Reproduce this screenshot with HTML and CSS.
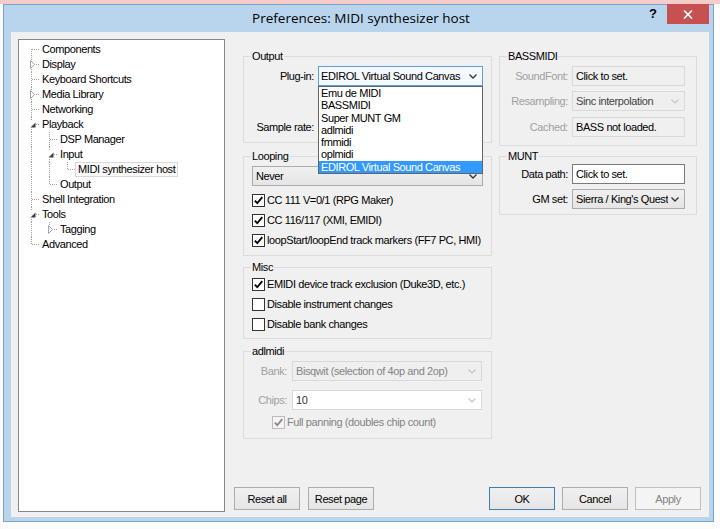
FILE: index.html
```html
<!DOCTYPE html>
<html>
<head>
<meta charset="utf-8">
<link rel="stylesheet" href="styles.css">
</head>
<body>
<div class="top-strip"></div>
<div class="desk-row">
  <div class="left-strip"></div>
  <div class="window">
    <div class="titlebar">
      <div></div>
      <div class="title">Preferences: MIDI synthesizer host</div>
      <div class="tb-right">
        <span class="help">?</span>
        <span class="close"><svg width="10" height="9" viewBox="0 0 10 9"><path d="M1 0.5 L9 8.5 M9 0.5 L1 8.5" stroke="#fff" stroke-width="1.7"/></svg></span>
      </div>
    </div>
    <div class="client">
      <div class="tree">
        <div class="trow"><span class="g first"></span><span class="lbl">Components</span></div>
        <div class="trow"><span class="g tee"><span class="exp"><svg width="5" height="9" viewBox="0 0 5 9"><path d="M0.5 0.5 L4.5 4.5 L0.5 8.5 Z" fill="#fff" stroke="#a6a6a6"/></svg></span></span><span class="lbl">Display</span></div>
        <div class="trow"><span class="g tee"></span><span class="lbl">Keyboard Shortcuts</span></div>
        <div class="trow"><span class="g tee"><span class="exp"><svg width="5" height="9" viewBox="0 0 5 9"><path d="M0.5 0.5 L4.5 4.5 L0.5 8.5 Z" fill="#fff" stroke="#a6a6a6"/></svg></span></span><span class="lbl">Media Library</span></div>
        <div class="trow"><span class="g tee"></span><span class="lbl">Networking</span></div>
        <div class="trow"><span class="g tee"><span class="exp"><svg width="6" height="6" viewBox="0 0 6 6"><path d="M5.5 0.5 L5.5 5.5 L0.5 5.5 Z" fill="#404040"/></svg></span></span><span class="lbl">Playback</span></div>
        <div class="trow"><span class="g pipe"></span><span class="g tee"></span><span class="lbl">DSP Manager</span></div>
        <div class="trow"><span class="g pipe"></span><span class="g tee"><span class="exp"><svg width="6" height="6" viewBox="0 0 6 6"><path d="M5.5 0.5 L5.5 5.5 L0.5 5.5 Z" fill="#404040"/></svg></span></span><span class="lbl">Input</span></div>
        <div class="trow"><span class="g pipe"></span><span class="g pipe"></span><span class="g last"></span><span class="lbl sel">MIDI synthesizer host</span></div>
        <div class="trow"><span class="g pipe"></span><span class="g last"></span><span class="lbl">Output</span></div>
        <div class="trow"><span class="g tee"></span><span class="lbl">Shell Integration</span></div>
        <div class="trow"><span class="g tee"><span class="exp"><svg width="6" height="6" viewBox="0 0 6 6"><path d="M5.5 0.5 L5.5 5.5 L0.5 5.5 Z" fill="#404040"/></svg></span></span><span class="lbl">Tools</span></div>
        <div class="trow"><span class="g pipe"></span><span class="g last"><span class="exp"><svg width="5" height="9" viewBox="0 0 5 9"><path d="M0.5 0.5 L4.5 4.5 L0.5 8.5 Z" fill="#fff" stroke="#a6a6a6"/></svg></span></span><span class="lbl">Tagging</span></div>
        <div class="trow"><span class="g last"></span><span class="lbl">Advanced</span></div>
      </div>

      <div class="page">
        <div class="groups">
          <div class="col col-left">
            <fieldset class="fld fld-output">
              <legend>Output</legend>
              <div class="frow r1">
                <span class="flabel w70">Plug-in:</span>
                <div class="combo-wrap">
                  <div class="combo active"><span class="val">EDIROL Virtual Sound Canvas</span><svg class="chev" width="8" height="5" viewBox="0 0 8 5"><path d="M0.5 0.5 L4 4 L7.5 0.5" fill="none" stroke="#333" stroke-width="1.3"/></svg></div>
                  <div class="dropdown">
                    <div class="opt">Emu de MIDI</div>
                    <div class="opt">BASSMIDI</div>
                    <div class="opt">Super MUNT GM</div>
                    <div class="opt">adlmidi</div>
                    <div class="opt">fmmidi</div>
                    <div class="opt">oplmidi</div>
                    <div class="opt hi">EDIROL Virtual Sound Canvas</div>
                  </div>
                </div>
              </div>
              <div class="frow r2">
                <span class="flabel w70">Sample rate:</span>
                <div class="combo grow"><span class="val"></span><svg class="chev" width="8" height="5" viewBox="0 0 8 5"><path d="M0.5 0.5 L4 4 L7.5 0.5" fill="none" stroke="#333" stroke-width="1.3"/></svg></div>
              </div>
            </fieldset>

            <fieldset class="fld fld-loop">
              <legend>Looping</legend>
              <div class="combo wide"><span class="val">Never</span><svg class="chev" width="8" height="5" viewBox="0 0 8 5"><path d="M0.5 0.5 L4 4 L7.5 0.5" fill="none" stroke="#333" stroke-width="1.3"/></svg></div>
              <div class="checks">
                <div class="chk"><span class="cb"><svg width="11" height="11" viewBox="0 0 11 11"><path d="M1.8 5.6 L4.3 8.2 L9.3 2.2" fill="none" stroke="#000" stroke-width="1.8"/></svg></span><span>CC 111 V=0/1 (RPG Maker)</span></div>
                <div class="chk"><span class="cb"><svg width="11" height="11" viewBox="0 0 11 11"><path d="M1.8 5.6 L4.3 8.2 L9.3 2.2" fill="none" stroke="#000" stroke-width="1.8"/></svg></span><span>CC 116/117 (XMI, EMIDI)</span></div>
                <div class="chk"><span class="cb"><svg width="11" height="11" viewBox="0 0 11 11"><path d="M1.8 5.6 L4.3 8.2 L9.3 2.2" fill="none" stroke="#000" stroke-width="1.8"/></svg></span><span>loopStart/loopEnd track markers (FF7 PC, HMI)</span></div>
              </div>
            </fieldset>

            <fieldset class="fld fld-misc">
              <legend>Misc</legend>
              <div class="checks">
                <div class="chk"><span class="cb"><svg width="11" height="11" viewBox="0 0 11 11"><path d="M1.8 5.6 L4.3 8.2 L9.3 2.2" fill="none" stroke="#000" stroke-width="1.8"/></svg></span><span>EMIDI device track exclusion (Duke3D, etc.)</span></div>
                <div class="chk"><span class="cb"></span><span>Disable instrument changes</span></div>
                <div class="chk"><span class="cb"></span><span>Disable bank changes</span></div>
              </div>
            </fieldset>

            <fieldset class="fld fld-adl">
              <legend>adlmidi</legend>
              <div class="frow a1">
                <span class="flabel w43 dis">Bank:</span>
                <div class="combo grow disabled"><span class="val">Bisqwit (selection of 4op and 2op)</span><svg class="chev" width="8" height="5" viewBox="0 0 8 5"><path d="M0.5 0.5 L4 4 L7.5 0.5" fill="none" stroke="#c4c4c4" stroke-width="1.2"/></svg></div>
              </div>
              <div class="frow a2">
                <span class="flabel w43 dis">Chips:</span>
                <div class="combo grow editc"><span class="val">10</span><svg class="chev" width="8" height="5" viewBox="0 0 8 5"><path d="M0.5 0.5 L4 4 L7.5 0.5" fill="none" stroke="#c4c4c4" stroke-width="1.2"/></svg></div>
              </div>
              <div class="chk pan"><span class="cb dis"><svg width="11" height="11" viewBox="0 0 11 11"><path d="M1.8 5.6 L4.3 8.2 L9.3 2.2" fill="none" stroke="#8a8a8a" stroke-width="1.8"/></svg></span><span class="distext">Full panning (doubles chip count)</span></div>
            </fieldset>
          </div>

          <div class="col col-right">
            <fieldset class="fld fld-bass">
              <legend>BASSMIDI</legend>
              <div class="frow b1">
                <span class="flabel w68 dis">SoundFont:</span>
                <div class="edit ro">Click to set.</div>
              </div>
              <div class="frow b2">
                <span class="flabel w68 dis">Resampling:</span>
                <div class="combo grow disabled dark"><span class="val">Sinc interpolation</span><svg class="chev" width="8" height="5" viewBox="0 0 8 5"><path d="M0.5 0.5 L4 4 L7.5 0.5" fill="none" stroke="#c4c4c4" stroke-width="1.2"/></svg></div>
              </div>
              <div class="frow b3">
                <span class="flabel w68 dis">Cached:</span>
                <div class="edit ro">BASS not loaded.</div>
              </div>
            </fieldset>

            <fieldset class="fld fld-munt">
              <legend>MUNT</legend>
              <div class="frow m1">
                <span class="flabel w68">Data path:</span>
                <div class="edit">Click to set.</div>
              </div>
              <div class="frow m2">
                <span class="flabel w68">GM set:</span>
                <div class="combo grow gm"><span class="val">Sierra / King's Quest</span><svg class="chev" width="8" height="5" viewBox="0 0 8 5"><path d="M0.5 0.5 L4 4 L7.5 0.5" fill="none" stroke="#333" stroke-width="1.3"/></svg></div>
              </div>
            </fieldset>
          </div>
        </div>

        <div class="btns">
          <button class="btn">Reset all</button>
          <button class="btn gap8">Reset page</button>
          <button class="btn ok">OK</button>
          <button class="btn gap7">Cancel</button>
          <button class="btn gap7 off">Apply</button>
        </div>
      </div>
    </div>
  </div>
  <div class="right-strip"></div>
</div>
</body>
</html>
```

FILE: styles.css
```css
* { box-sizing: border-box; }
html, body { margin: 0; padding: 0; }
body {
  width: 720px;
  height: 529px;
  overflow: hidden;
  background: #fbfbfb;
  font-family: "Liberation Sans", Arial, sans-serif;
  font-size: 11px;
  letter-spacing: -0.4px;
  color: #000;
}

.top-strip { height: 4px; background: #f4cccc; }
.desk-row { display: flex; height: 525px; }
.left-strip { width: 3px; background: #fafafa; }
.right-strip { flex: 1; background: #fdfdfd; }

.window {
  width: 711px;
  height: 518px;
  border: 1px solid #7ea3c9;
  background: #b9d5ee;
  padding: 0 4px 4px 7px;
  display: flex;
  flex-direction: column;
}

.titlebar {
  height: 27px;
  flex: none;
  display: grid;
  grid-template-columns: 1fr auto 1fr;
  padding-left: 2px;
}
.title {
  font-family: "Open Sans", "Liberation Sans", sans-serif;
  font-size: 13.5px;
  letter-spacing: 0;
  line-height: 27px;
  color: #000;
  white-space: nowrap;
}
.tb-right { display: flex; justify-content: flex-end; align-items: flex-start; }
.help {
  font-weight: bold;
  font-size: 13px;
  letter-spacing: 0;
  line-height: 18px;
  margin-right: 10px;
}
.close {
  width: 42px;
  height: 20px;
  margin-top: -1px;
  background: #c75050;
  display: flex;
  align-items: center;
  justify-content: center;
}

.client {
  flex: 1;
  display: flex;
  background: #f0f0f0;
}

/* tree */
.tree {
  width: 207px;
  margin: 7px 0 5px 7px;
  border: 1px solid #828790;
  background: #fff;
  padding: 2px 0 0 2px;
  flex: none;
}
.trow { display: flex; height: 15px; align-items: center; }
.g { width: 18px; height: 15px; flex: none; display: flex; align-items: center; }
.g.pipe {
  background: repeating-linear-gradient(to bottom, #a0a0a0 0 1px, transparent 1px 2px) 10px 0 / 1px 15px no-repeat;
}
.g.tee {
  background:
    repeating-linear-gradient(to right, #a0a0a0 0 1px, transparent 1px 2px) 11px 7px / 7px 1px no-repeat,
    repeating-linear-gradient(to bottom, #a0a0a0 0 1px, transparent 1px 2px) 10px 0 / 1px 15px no-repeat;
}
.g.last {
  background:
    repeating-linear-gradient(to right, #a0a0a0 0 1px, transparent 1px 2px) 11px 7px / 7px 1px no-repeat,
    repeating-linear-gradient(to bottom, #a0a0a0 0 1px, transparent 1px 2px) 10px 0 / 1px 8px no-repeat;
}
.g.first {
  background:
    repeating-linear-gradient(to right, #a0a0a0 0 1px, transparent 1px 2px) 11px 7px / 7px 1px no-repeat,
    repeating-linear-gradient(to bottom, #a0a0a0 0 1px, transparent 1px 2px) 10px 7px / 1px 8px no-repeat;
}
.exp {
  margin-left: 8px;
  width: 7px;
  height: 9px;
  background: #fff;
  display: flex;
  align-items: center;
  justify-content: center;
}
.lbl {
  border: 1px solid transparent;
  padding: 0 2px;
  line-height: 13px;
  white-space: nowrap;
}
.lbl.sel { border-color: #d9d9d9; background: #fafafa; }

/* page */
.page { flex: 1; display: flex; flex-direction: column; }
.groups {
  flex: 1;
  display: flex;
  gap: 7px;
  padding: 18px 0 0 18px;
  align-items: flex-start;
}
.col { display: flex; flex-direction: column; }
.col-left { width: 249px; }
.col-right { width: 198px; }

.fld {
  margin: 0;
  padding: 0;
  border: 1px solid #dcdcdc;
  min-width: 0;
}
.fld legend {
  margin-left: 7px;
  padding: 0 1px;
  line-height: 13px;
  height: 13px;
}

.frow { display: flex; align-items: center; height: 20px; }
.flabel { text-align: right; flex: none; white-space: nowrap; }
.flabel.dis { color: #a0a0a0; }
.w70 { width: 70px; margin-right: 4px; }
.w43 { width: 43px; margin-right: 5px; }
.w68 { width: 68px; margin-right: 4px; }

.fld-output { padding-bottom: 5px; }
.fld-output .r1 { margin-top: 3px; }
.fld-output .r2 { margin-top: 31px; }
.combo-wrap { position: relative; width: 165px; height: 20px; }
.combo-wrap .combo { width: 100%; }
.grow { width: 165px; }

.combo {
  height: 20px;
  border: 1px solid #acacac;
  background: linear-gradient(#f0f0f0, #e5e5e5);
  display: flex;
  align-items: center;
  padding-left: 3px;
  white-space: nowrap;
}
.combo .val { flex: 1; overflow: hidden; }
.combo .chev { flex: none; margin: 0 5px 0 5px; }
.combo.gm .chev { margin-left: 3px; }
.combo.active { border-color: #5a9fe0; background: #f5f9fd; padding-left: 2px; }
.combo.disabled { border-color: #d9d9d9; background: #efefef; color: #838383; }
.combo.disabled.dark { color: #444; }
.combo.editc { border-color: #d9d9d9; background: #fff; color: #333; }

.dropdown {
  position: absolute;
  top: 20px;
  left: 0;
  width: 165px;
  border: 1px solid #646464;
  background: #fff;
  z-index: 2;
}
.opt { height: 12.3px; line-height: 12.3px; padding-left: 2px; white-space: nowrap; }
.opt.hi { background: #3399ff; color: #fff; }

.fld-loop { margin-top: 7px; padding-bottom: 5px; }
.combo.wide { margin: 3px 8px 0 8px; }
.checks { margin-top: 4px; }
.fld-misc .checks { margin-top: 0; }
.chk { display: flex; align-items: center; height: 20px; padding-left: 8px; white-space: nowrap; }
.cb {
  width: 13px;
  height: 13px;
  border: 1px solid #333;
  background: #fff;
  margin-right: 2px;
  display: flex;
  align-items: center;
  justify-content: center;
  flex: none;
}
.cb.dis { border-color: #bcbcbc; background: #f4f4f4; }
.distext { color: #838383; }

.fld-misc { margin-top: 5px; padding-bottom: 4px; }
.fld-adl { margin-top: 6px; padding-bottom: 6px; }
.fld-adl .a1 { margin-top: 3px; }
.fld-adl .a2 { margin-top: 9px; }
.fld-adl .grow { width: 190px; }
.chk.pan { padding-left: 28px; margin-top: 2px; }

.fld-bass { padding-bottom: 8px; }
.fld-bass .b1 { margin-top: 3px; }
.fld-bass .b2 { margin-top: 5px; }
.fld-bass .b3 { margin-top: 6px; }
.fld-bass .grow, .fld-munt .grow { width: 113px; }
.edit {
  width: 113px;
  height: 20px;
  border: 1px solid #7a7a7a;
  background: #fff;
  line-height: 18px;
  padding-left: 3px;
  white-space: nowrap;
  overflow: hidden;
}
.edit.ro { border-color: #d9d9d9; background: #f0f0f0; }

.fld-munt { margin-top: 4px; padding-bottom: 5px; }
.fld-munt .m1 { margin-top: 1px; }
.fld-munt .m2 { margin-top: 5px; }

.btns {
  display: flex;
  align-items: center;
  padding: 0 8px 7px 9px;
}
.btn {
  width: 66px;
  height: 23px;
  border: 1px solid #acacac;
  background: linear-gradient(#f0f0f0, #e5e5e5);
  font-family: "Liberation Sans", Arial, sans-serif;
  font-size: 11px;
  letter-spacing: -0.4px;
  color: #000;
  padding: 0;
  margin: 0;
}
.btn.gap8 { margin-left: 8px; }
.btn.gap7 { margin-left: 7px; }
.btn.ok { margin-left: auto; border-color: #3c7fb1; }
.btn.off { border-color: #bfbfbf; background: #f4f4f4; color: #838383; }
```
